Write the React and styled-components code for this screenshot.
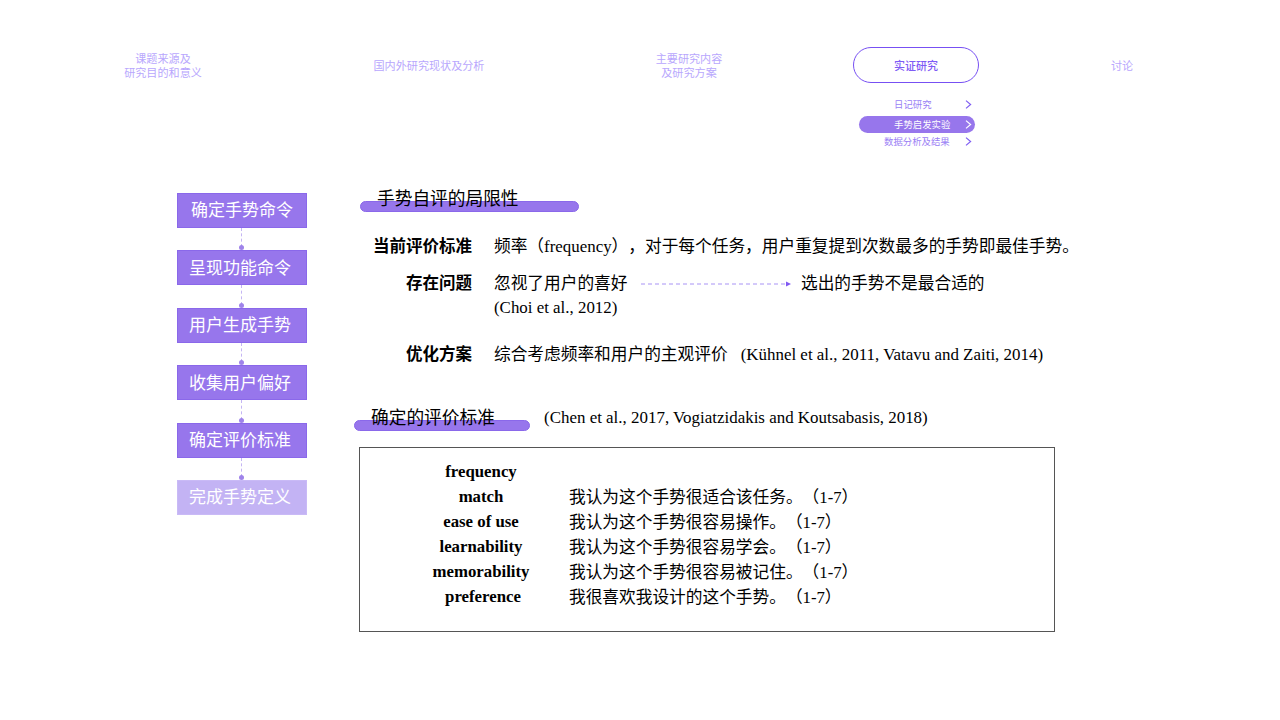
import React from "react";
import styled, { createGlobalStyle } from "styled-components";

const serif = `"Liberation Serif", "Noto Sans CJK SC", serif`;
const sans = `"Noto Sans CJK SC", "Liberation Sans", sans-serif`;

const navItems = [
    { width: 200, lines: ["课题来源及", "研究目的和意义"] },
    { width: 332, lines: ["国内外研究现状及分析"] },
    { width: 188, lines: ["主要研究内容", "及研究方案"] },
    { width: 266, lines: ["实证研究"], active: true },
    { width: 146, lines: ["讨论"] },
];

const subItems = [
    { label: "日记研究", indent: 35 },
    { label: "手势启发实验", indent: 35, active: true },
    { label: "数据分析及结果", indent: 25 },
];

const steps = ["确定手势命令", "呈现功能命令", "用户生成手势", "收集用户偏好", "确定评价标准", "完成手势定义"];

const criteria = [
    { name: "frequency" },
    { name: "match", text: "我认为这个手势很适合该任务。（1-7）" },
    { name: "ease of use", text: "我认为这个手势很容易操作。（1-7）" },
    { name: "learnability", text: "我认为这个手势很容易学会。（1-7）" },
    { name: "memorability", text: "我认为这个手势很容易被记住。（1-7）" },
    { name: "preference", text: "我很喜欢我设计的这个手势。（1-7）", nudge: 4 },
];

const Chevron = ({ color }) => (
    <ChevronIcon viewBox="0 0 7 9" fill="none" stroke={color} strokeWidth="1.2">
        <path d="M1 0.6 L5.6 4.5 L1 8.4" />
    </ChevronIcon>
);

const App = () => {
    return (
        <Page>
            <GlobalStyle />
            <Nav>
                {navItems.map((item) => (
                    <NavColumn key={item.lines[0]} $width={item.width}>
                        {item.active ? (
                            <>
                                <ActivePill>{item.lines[0]}</ActivePill>
                                <SubMenu>
                                    {subItems.map((sub) => (
                                        <SubItem key={sub.label} $active={sub.active} $indent={sub.indent}>
                                            <SubLabel>{sub.label}</SubLabel>
                                            <Chevron color={sub.active ? "#ffffff" : "#7f5ef2"} />
                                        </SubItem>
                                    ))}
                                </SubMenu>
                            </>
                        ) : (
                            <NavLabel>
                                {item.lines.map((line) => (
                                    <div key={line}>{line}</div>
                                ))}
                            </NavLabel>
                        )}
                    </NavColumn>
                ))}
            </Nav>
            <Body>
                <Steps>
                    {steps.map((step, i) => (
                        <React.Fragment key={step}>
                            {i > 0 && <Connector />}
                            <Step $first={i === 0} $faded={i === steps.length - 1}>
                                {step}
                            </Step>
                        </React.Fragment>
                    ))}
                </Steps>
                <Main>
                    <Heading $width={219}>手势自评的局限性</Heading>
                    <InfoRow $top={25}>
                        <InfoLabel>当前评价标准</InfoLabel>
                        <div>
                            频率（<Latin>frequency</Latin>），对于每个任务，用户重复提到次数最多的手势即最佳手势。
                        </div>
                    </InfoRow>
                    <InfoRow $top={13}>
                        <InfoLabel>存在问题</InfoLabel>
                        <ProblemLine>
                            忽视了用户的喜好
                            <Arrow viewBox="0 0 150 6" fill="none">
                                <path d="M0 3 H145" stroke="#a893f5" strokeWidth="1" strokeDasharray="4 3" />
                                <path d="M145 0.5 L150 3 L145 5.5 Z" fill="#8058f2" />
                            </Arrow>
                            选出的手势不是最合适的
                        </ProblemLine>
                    </InfoRow>
                    <InfoRow $top={0}>
                        <span />
                        <Latin>(Choi et al., 2012)</Latin>
                    </InfoRow>
                    <InfoRow $top={23}>
                        <InfoLabel>优化方案</InfoLabel>
                        <div>
                            综合考虑频率和用户的主观评价<Cite>(Kühnel et al., 2011, Vatavu and Zaiti, 2014)</Cite>
                        </div>
                    </InfoRow>
                    <HeadingRow>
                        <Heading $width={176} $shift={-6}>
                            确定的评价标准
                        </Heading>
                        <HeadingCite>(Chen et al., 2017, Vogiatzidakis and Koutsabasis, 2018)</HeadingCite>
                    </HeadingRow>
                    <CriteriaBox>
                        {criteria.map((row) => (
                            <CriteriaRow key={row.name}>
                                <CriteriaName $nudge={row.nudge}>{row.name}</CriteriaName>
                                <div>{row.text}</div>
                            </CriteriaRow>
                        ))}
                    </CriteriaBox>
                </Main>
            </Body>
        </Page>
    );
};

const GlobalStyle = createGlobalStyle`
    html, body {
        margin: 0;
        padding: 0;
        background: #ffffff;
    }
`;

const Page = styled.div`
    width: 1280px;
    height: 720px;
    overflow: hidden;
    padding-top: 47px;
    box-sizing: border-box;
    font-family: ${serif};
    color: #000000;
    text-spacing-trim: space-all;
`;

const Nav = styled.nav`
    display: flex;
    height: 146px;
    padding-left: 63px;
`;

const NavColumn = styled.div`
    width: ${(props) => props.$width}px;
    display: flex;
    flex-direction: column;
    align-items: center;
`;

const NavLabel = styled.div`
    height: 36px;
    display: flex;
    flex-direction: column;
    justify-content: center;
    font-family: ${sans};
    font-size: 11.1px;
    line-height: 14px;
    text-align: center;
    color: #b8a7fd;
`;

const ActivePill = styled.div`
    width: 126px;
    height: 36px;
    box-sizing: border-box;
    border: 1px solid #7750f3;
    border-radius: 18px;
    display: flex;
    align-items: center;
    justify-content: center;
    font-family: ${sans};
    font-size: 11px;
    font-weight: 500;
    color: #7f5cf5;
`;

const SubMenu = styled.div`
    width: 116px;
    margin: 13px 0 0 2px;
    display: flex;
    flex-direction: column;
`;

const SubItem = styled.div`
    height: 17px;
    margin-top: ${(props) => (props.$active ? "3px" : "0")};
    box-sizing: border-box;
    padding-left: ${(props) => props.$indent}px;
    padding-right: 3px;
    display: flex;
    align-items: center;
    justify-content: space-between;
    border-radius: 9px;
    font-family: ${sans};
    font-size: 9.4px;
    color: ${(props) => (props.$active ? "#ffffff" : "#9a7ef5")};
    background: ${(props) => (props.$active ? "#9776ec" : "transparent")};
`;

const SubLabel = styled.span`
    margin-bottom: 1px;
`;

const ChevronIcon = styled.svg`
    width: 7px;
    height: 9px;
`;

const Body = styled.div`
    display: flex;
    padding-left: 177px;
`;

const Steps = styled.div`
    width: 130px;
    display: flex;
    flex-direction: column;
`;

const Step = styled.div`
    height: 35px;
    box-sizing: border-box;
    padding-bottom: ${(props) => (props.$first ? "5px" : "3px")};
    padding-right: ${(props) => (props.$first ? "0" : "4px")};
    border: 1px solid ${(props) => (props.$faded ? "#c9baf6" : "#8a68ea")};
    display: flex;
    align-items: center;
    justify-content: center;
    font-family: ${sans};
    font-size: 17px;
    color: #ffffff;
    background: ${(props) => (props.$faded ? "#c3b3f4" : "#9776ec")};
`;

const Connector = styled.div`
    position: relative;
    height: 22.4px;

    &::before {
        content: "";
        position: absolute;
        left: 64px;
        top: 0;
        bottom: 3px;
        border-left: 1px dashed #c4b5f3;
    }

    &::after {
        content: "";
        position: absolute;
        left: 62px;
        bottom: 0;
        width: 5px;
        height: 5px;
        border-radius: 50%;
        background: #9f83ea;
    }
`;

const Main = styled.div`
    margin-left: 53px;
    width: 740px;
    margin-top: -7px;
    font-size: 16.7px;
    line-height: 24px;
`;

const Heading = styled.div`
    position: relative;
    width: ${(props) => props.$width}px;
    height: 24px;
    margin-left: ${(props) => props.$shift || 0}px;
    padding-left: 17px;
    box-sizing: border-box;
    font-family: ${sans};
    font-size: 17.7px;
    line-height: 22px;
    z-index: 0;

    &::before {
        content: "";
        position: absolute;
        z-index: -1;
        left: 0;
        right: 0;
        top: 15px;
        height: 11px;
        box-sizing: border-box;
        border: 1px solid #8a68ea;
        border-radius: 6px;
        background: #9776ec;
    }
`;

const HeadingRow = styled.div`
    display: flex;
    align-items: flex-start;
    height: 24px;
    margin-top: 38px;
`;

const HeadingCite = styled.div`
    margin-left: 14px;
    padding-top: 1px;
    font-size: 16.95px;
`;

const InfoRow = styled.div`
    display: grid;
    grid-template-columns: 112px 1fr;
    column-gap: 22px;
    margin-top: ${(props) => props.$top}px;
    font-family: ${serif};
    white-space: nowrap;
`;

const InfoLabel = styled.div`
    font-size: 16.5px;
    font-weight: 700;
    text-align: right;
`;

const ProblemLine = styled.div`
    display: flex;
    align-items: center;
`;

const Arrow = styled.svg`
    width: 150px;
    height: 6px;
    margin: 0 10px 0 13.5px;
`;

const Latin = styled.span`
    font-size: 16.9px;
`;

const Cite = styled.span`
    margin-left: 13px;
    font-size: 16.95px;
`;

const CriteriaBox = styled.div`
    width: 696px;
    height: 185px;
    margin: 18px 0 0 -1px;
    padding-top: 12px;
    box-sizing: border-box;
    border: 1px solid #555555;
`;

const CriteriaRow = styled.div`
    display: grid;
    grid-template-columns: 176px 1fr;
    height: 25px;
    padding-left: 33px;
    line-height: 25px;
`;

const CriteriaName = styled.div`
    position: relative;
    top: -1px;
    font-size: 16.8px;
    font-weight: 700;
    text-align: center;
    padding-left: ${(props) => props.$nudge || 0}px;
`;

export default App;
